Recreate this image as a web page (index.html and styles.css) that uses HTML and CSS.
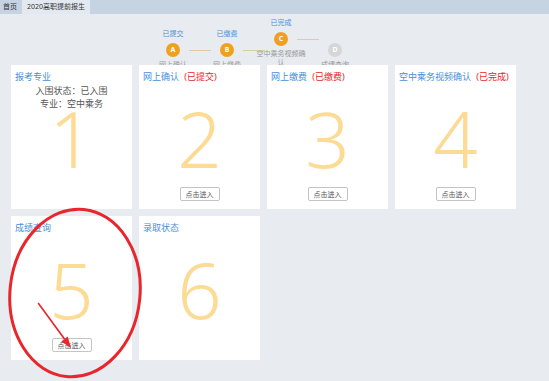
FILE: index.html
```html
<!DOCTYPE html>
<html lang="zh-CN">
<head>
    <meta charset="UTF-8">
    <meta name="viewport" content="width=device-width, initial-scale=1.0">
    <title>2020高职提前报生</title>
    <link rel="stylesheet" href="styles.css">
</head>
<body>

    <div class="tabbar">
        <span class="tab">首页</span>
        <span class="tab active">2020高职提前报生</span>
    </div>

    <div class="steps">
        <div class="step">
            <span class="step-top">已提交</span>
            <span class="dot">A</span>
            <span class="step-sub">网上确认</span>
        </div>
        <div class="step-line"></div>
        <div class="step">
            <span class="step-top">已缴费</span>
            <span class="dot">B</span>
            <span class="step-sub">网上缴费</span>
        </div>
        <div class="step-line"></div>
        <div class="step current">
            <span class="step-top">已完成</span>
            <span class="dot">C</span>
            <span class="step-sub">空中乘务视频确认</span>
        </div>
        <div class="step-line raised"></div>
        <div class="step todo">
            <span class="step-top"></span>
            <span class="dot">D</span>
            <span class="step-sub">成绩查询</span>
        </div>
    </div>

    <div class="cards">
        <div class="card">
            <div class="card-title">报考专业</div>
            <div class="info">
                <p>入围状态：已入围</p>
                <p>专业：空中乘务</p>
            </div>
            <div class="num">1</div>
        </div>

        <div class="card">
            <div class="card-title">网上确认 <span class="state">(已提交)</span></div>
            <div class="num">2</div>
            <button class="btn">点击进入</button>
        </div>

        <div class="card">
            <div class="card-title">网上缴费 <span class="state">(已缴费)</span></div>
            <div class="num">3</div>
            <button class="btn">点击进入</button>
        </div>

        <div class="card">
            <div class="card-title">空中乘务视频确认 <span class="state">(已完成)</span></div>
            <div class="num">4</div>
            <button class="btn">点击进入</button>
        </div>

        <div class="card">
            <div class="card-title">成绩查询</div>
            <div class="num">5</div>
            <button class="btn">点击进入</button>
        </div>

        <div class="card">
            <div class="card-title">录取状态</div>
            <div class="num">6</div>
        </div>
    </div>

    <!-- red marker drawn over the screenshot -->
    <svg class="mark" width="549" height="381" viewBox="0 0 549 381">
        <ellipse cx="75" cy="293" rx="65" ry="84" transform="rotate(6 75 293)" fill="none" stroke="#e8262b" stroke-width="3"/>
        <polygon points="37.5,303.5 38.8,302.6 65.2,338.4 63.8,339.6" fill="#e8262b"/>
        <polygon points="71,348 67.7,336.6 61.3,341.4" fill="#e8262b"/>
    </svg>

</body>
</html>
```

FILE: styles.css
```css
body {
    margin: 0;
    width: 549px;
    height: 381px;
    background-color: #e8ecf1;
    font-family: "Noto Sans", "Noto Sans CJK SC", sans-serif;
    color: #555;
    position: relative;
    overflow: hidden;
}

.tabbar {
    height: 14px;
    background-color: #c6d3e3;
    display: flex;
    align-items: stretch;
}

.tab {
    font-size: 7px;
    line-height: 14px;
    padding: 0 3px;
    color: #333;
    margin-right: 2px;
}

.tab.active {
    background-color: #e3e9f1;
    padding: 0 5px;
}

/* steps */
.steps {
    height: 51px;
    display: flex;
    align-items: flex-start;
    padding-top: 15px;
    padding-left: 158px;
    box-sizing: border-box;
}

.step {
    width: 30px;
    display: flex;
    flex-direction: column;
    align-items: center;
}

.step.current {
    margin-top: -11px;
}

.step-top {
    height: 10px;
    line-height: 10px;
    font-size: 7px;
    color: #4a8fd8;
    white-space: nowrap;
    margin-bottom: 4px;
}

.dot {
    width: 14px;
    height: 14px;
    border-radius: 50%;
    background-color: #f0a020;
    color: #fff;
    font-size: 7px;
    font-weight: bold;
    line-height: 14px;
    text-align: center;
}

.step.todo .dot {
    background-color: #d6d6d6;
}

.step-sub {
    width: 50px;
    font-size: 7px;
    line-height: 9px;
    color: #999;
    text-align: center;
    margin-top: 3px;
}

.step-line {
    width: 22px;
    height: 1px;
    margin: 21px 1px 0;
    background-color: #dccca2;
}

.step-line.raised {
    margin-top: 10px;
}

/* cards */
.cards {
    display: flex;
    flex-wrap: wrap;
    gap: 7px;
    width: 516px;
    padding-left: 11px;
    box-sizing: border-box;
}

.card {
    position: relative;
    width: 121px;
    height: 144px;
    background-color: #fff;
    display: grid;
    grid-template-columns: 100%;
    grid-template-rows: 24px 98px 22px;
    justify-items: center;
}

.card-title {
    grid-row: 1;
    grid-column: 1;
    justify-self: start;
    padding-left: 4px;
    font-size: 9px;
    line-height: 24px;
    color: #4a8fd8;
    white-space: nowrap;
}

.state {
    color: #e8262b;
    margin-left: 3px;
}

.info {
    grid-row: 2;
    grid-column: 1;
    align-self: start;
    margin-top: -5px;
    text-align: center;
    font-size: 9px;
    color: #555;
}

.info p {
    margin: 0;
    line-height: 13px;
}

.num {
    grid-row: 2;
    grid-column: 1;
    align-self: center;
    font-size: 78px;
    font-weight: 300;
    line-height: 0.72;
    color: #fcdb95;
}

.btn {
    grid-row: 3;
    grid-column: 1;
    align-self: start;
    font-family: inherit;
    font-size: 7px;
    height: 14px;
    padding: 0 5px;
    background-color: #fff;
    border: 1px solid #c4c4c4;
    border-radius: 2px;
    color: #555;
}

.mark {
    position: absolute;
    left: 0;
    top: 0;
    pointer-events: none;
}
```
